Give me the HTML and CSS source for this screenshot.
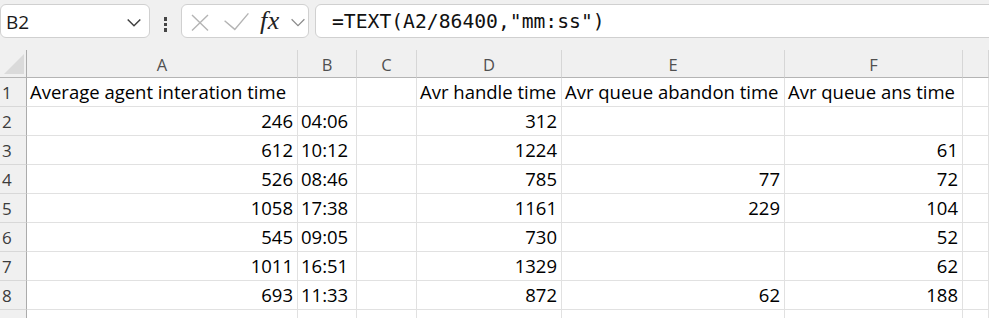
FILE: index.html
```html
<!DOCTYPE html>
<html>
<head>
<meta charset="utf-8">
<link rel="stylesheet" href="styles.css">
</head>
<body>
<div class="bar">
  <div class="namebox">
    <span class="ref">B2</span>
    <svg class="ico" width="14" height="32" viewBox="0 0 14 32"><polyline points="0.7,14.5 7,20.7 13.3,14.5" fill="none" stroke="#404040" stroke-width="1.5"/></svg>
  </div>
  <div class="dots"><i></i><i></i><i></i></div>
  <div class="fbox">
    <svg class="ico x" width="18" height="32" viewBox="0 0 18 32"><path d="M1 10 L17 25.5 M17 10 L1 25.5" stroke="#b4b4b4" stroke-width="1.4" fill="none"/></svg>
    <svg class="ico ok" width="25" height="32" viewBox="0 0 25 32"><polyline points="0.6,15.8 10.8,24.4 24.4,8.4" fill="none" stroke="#b4b4b4" stroke-width="1.4"/></svg>
    <span class="fx">fx</span>
    <svg class="ico dd" width="14" height="32" viewBox="0 0 14 32"><polyline points="0.6,14.3 7,20.6 13.4,14.3" fill="none" stroke="#8a8a8a" stroke-width="1.2"/></svg>
  </div>
  <div class="formula">=TEXT(A2/86400,"mm:ss")</div>
</div>

<div class="sheet">
  <div class="corner"><svg width="20" height="20" viewBox="0 0 20 20"><polygon points="0,20 20,20 20,0" fill="#dadada"/></svg></div>
  <div class="h">A</div><div class="h">B</div><div class="h">C</div><div class="h">D</div><div class="h">E</div><div class="h">F</div><div class="h"></div>

  <div class="n">1</div><div class="c">Average agent interation time</div><div class="c"></div><div class="c"></div><div class="c">Avr handle time</div><div class="c">Avr queue abandon time</div><div class="c">Avr queue ans time</div><div class="c"></div>

  <div class="n">2</div><div class="c r">246</div><div class="c">04:06</div><div class="c"></div><div class="c r">312</div><div class="c r"></div><div class="c r"></div><div class="c"></div>

  <div class="n">3</div><div class="c r">612</div><div class="c">10:12</div><div class="c"></div><div class="c r">1224</div><div class="c r"></div><div class="c r">61</div><div class="c"></div>

  <div class="n">4</div><div class="c r">526</div><div class="c">08:46</div><div class="c"></div><div class="c r">785</div><div class="c r">77</div><div class="c r">72</div><div class="c"></div>

  <div class="n">5</div><div class="c r">1058</div><div class="c">17:38</div><div class="c"></div><div class="c r">1161</div><div class="c r">229</div><div class="c r">104</div><div class="c"></div>

  <div class="n">6</div><div class="c r">545</div><div class="c">09:05</div><div class="c"></div><div class="c r">730</div><div class="c r"></div><div class="c r">52</div><div class="c"></div>

  <div class="n">7</div><div class="c r">1011</div><div class="c">16:51</div><div class="c"></div><div class="c r">1329</div><div class="c r"></div><div class="c r">62</div><div class="c"></div>

  <div class="n">8</div><div class="c r">693</div><div class="c">11:33</div><div class="c"></div><div class="c r">872</div><div class="c r">62</div><div class="c r">188</div><div class="c"></div>

  <div class="n"></div><div class="c"></div><div class="c"></div><div class="c"></div><div class="c"></div><div class="c"></div><div class="c"></div><div class="c"></div>
</div>
</body>
</html>
```

FILE: styles.css
```css
* { box-sizing: border-box; }
html, body {
  margin: 0;
  padding: 0;
  background: #f0f0f0;
  overflow: hidden;
  width: 989px;
  height: 318px;
}
body {
  font-family: "Open Sans", sans-serif;
  color: #000;
}
.bar {
  display: flex;
  align-items: flex-start;
  padding-top: 4px;
  height: 38px;
}
.namebox {
  width: 150px;
  height: 34px;
  background: #fff;
  border: 1px solid #d0d0d0;
  border-radius: 6px;
  display: flex;
  justify-content: space-between;
  align-items: flex-start;
  padding: 0 8px 0 5px;
}
.ref {
  font-size: 19px;
  line-height: 32px;
  padding-top: 1px;
  color: #1a1a1a;
}
.ico { display: block; flex: none; }
.dots {
  width: 31px;
  height: 34px;
  display: flex;
  flex-direction: column;
  align-items: center;
  padding-top: 13px;
  gap: 2px;
}
.dots i {
  display: block;
  width: 3.5px;
  height: 3.5px;
  background: #454545;
}
.fbox {
  width: 128px;
  height: 34px;
  background: #fff;
  border: 1px solid #d0d0d0;
  border-radius: 6px;
  display: flex;
  align-items: flex-start;
  padding-left: 9px;
}
.fbox .ok { margin-left: 15px; }
.fx {
  margin-left: 11px;
  width: 23px;
  font-family: "Liberation Serif", serif;
  font-style: italic;
  font-size: 26px;
  line-height: 32px;
  letter-spacing: 0.5px;
  color: #222;
}
.fbox .dd { margin-left: 8px; }
.formula {
  flex: 1;
  margin-left: 6px;
  margin-right: -20px;
  height: 34px;
  background: #fff;
  border: 1px solid #d0d0d0;
  border-radius: 6px;
  padding: 2px 0 0 16px;
  font-family: "DejaVu Sans Mono", monospace;
  font-size: 19.7px;
  line-height: 30px;
  color: #111;
  white-space: nowrap;
}
.sheet {
  margin-top: 12px;
  display: grid;
  grid-template-columns: 27px 271px 59px 60px 145px 223px 178px 1fr;
  grid-template-rows: 28px;
  grid-auto-rows: 29px;
}
.corner {
  border-right: 1px solid #ababab;
  border-bottom: 1px solid #b4b4b4;
  display: flex;
  justify-content: flex-end;
  align-items: flex-end;
  padding: 0 2px 3px 0;
}
.corner svg { display: block; }
.h {
  border-right: 1px solid #d6d6d6;
  border-bottom: 1px solid #b4b4b4;
  text-align: center;
  font-size: 16.5px;
  line-height: 25px;
  padding-top: 2px;
  color: #505050;
}
.n {
  border-right: 1px solid #ababab;
  border-bottom: 1px solid #d8d8d8;
  font-size: 17px;
  line-height: 28px;
  padding: 1px 0 0 2px;
  color: #3c3c3c;
}
.c {
  background: #fff;
  border-right: 1px solid #e1e1e1;
  border-bottom: 1px solid #e1e1e1;
  font-size: 18.5px;
  line-height: 28px;
  padding: 0 4px 0 3px;
  white-space: nowrap;
}
.c.r { text-align: right; }
```
